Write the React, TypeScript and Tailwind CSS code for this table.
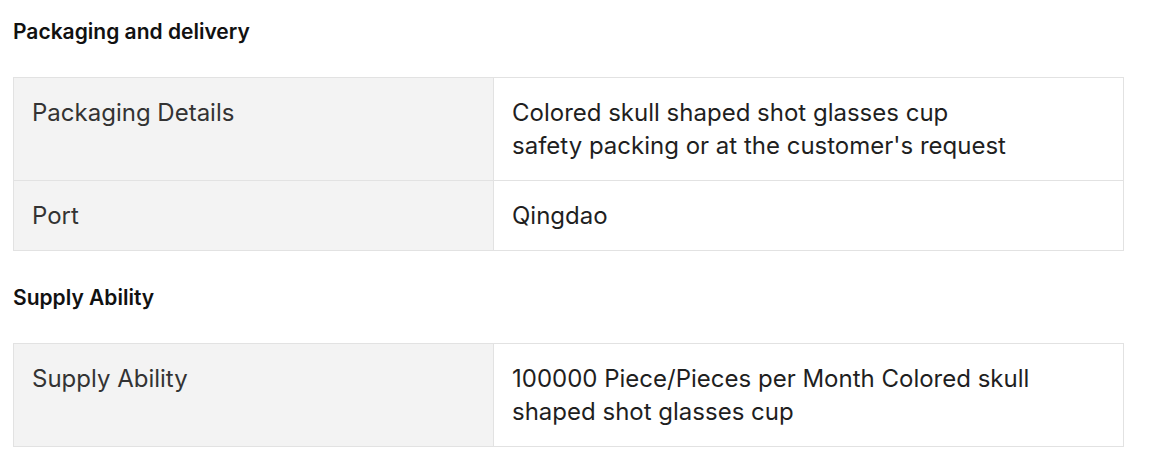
import React from "react";

type Row = { label: string; value: React.ReactNode };

const packaging: Row[] = [
  {
    label: "Packaging Details",
    value: (
      <>
        Colored skull shaped shot glasses cup
        <br />
        safety packing or at the customer's request
      </>
    ),
  },
  { label: "Port", value: "Qingdao" },
];

const supply: Row[] = [
  {
    label: "Supply Ability",
    value: "100000 Piece/Pieces per Month Colored skull shaped shot glasses cup",
  },
];

function SpecTable({ rows }: { rows: Row[] }) {
  return (
    <table className="w-[1111px] border-collapse table-fixed">
      <tbody>
        {rows.map((r) => (
          <tr key={r.label}>
            <td className="w-[480px] border border-[#e2e2e2] bg-[#f3f3f3] px-[18px] py-[18px] align-top text-[24px] leading-[33px] text-[#333333]">
              {r.label}
            </td>
            <td className="border border-[#e2e2e2] bg-white px-[18px] py-[18px] align-top text-[24px] leading-[33px] text-[#1f1f1f]">
              {r.value}
            </td>
          </tr>
        ))}
      </tbody>
    </table>
  );
}

export default function App() {
  return (
    <div className="min-h-[463px] w-[1156px] bg-white pl-[13px] pt-[20px] font-['Inter',sans-serif]">
      <h2 className="text-[21px] leading-[24px] font-semibold text-[#111111]">
        Packaging and delivery
      </h2>
      <div className="mt-[33px]">
        <SpecTable rows={packaging} />
      </div>
      <h2 className="mt-[35px] text-[21px] leading-[24px] font-semibold text-[#111111]">
        Supply Ability
      </h2>
      <div className="mt-[33px]">
        <SpecTable rows={supply} />
      </div>
    </div>
  );
}
